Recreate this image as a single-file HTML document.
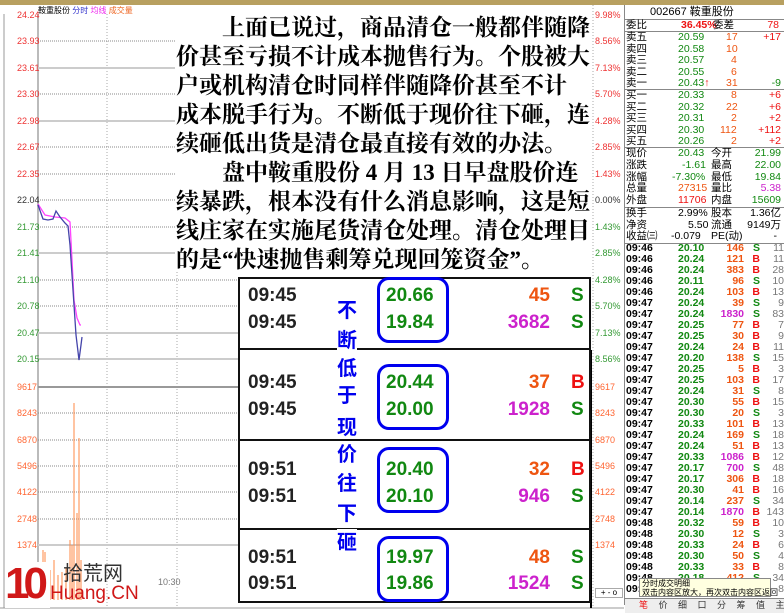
<!DOCTYPE html>
<html><head><meta charset="utf-8"><style>
*{margin:0;padding:0;box-sizing:border-box}
body{width:784px;height:613px;overflow:hidden;background:#fff;position:relative;font-family:"Liberation Sans","Noto Sans CJK SC",sans-serif}
.a{position:absolute;white-space:nowrap}
.lb{font-size:9px;left:17px}
.rb{font-size:9px;left:595px}
.t{font-family:"Liberation Serif","Noto Serif CJK SC",serif;font-size:23px;color:#000;font-weight:bold;line-height:29px;left:176px;letter-spacing:0}
.tm{font:bold 19px "Liberation Sans",sans-serif;color:#222;left:248px}
.px{font:bold 19px "Liberation Sans",sans-serif;color:#118811;left:386px}
.q{font:bold 19px "Liberation Sans",sans-serif;right:234px;text-align:right}
.bs{font:bold 19px "Liberation Sans",sans-serif;left:571px}
.box{position:absolute;left:377px;width:72px;height:66px;border:3px solid #0000ee;border-radius:12px}
.vt{font:bold 20px "Noto Sans CJK SC",sans-serif;color:#0000ee;left:337px;background:#fff;line-height:24px}
.r{font-size:10.5px;line-height:11px;font-weight:bold}
.g{color:#118811}.rd{color:#ee1111}.or{color:#ee5511}.mg{color:#cc22cc}
</style></head><body>
<div class="a" style="left:0;top:0;width:784px;height:5px;background:#b8a060"></div>
<div class="a" style="left:38px;top:5px;font-size:8px;color:#000">鞍重股份 <span style="color:#33c">分时</span> <span style="color:#e2e">均线</span> <span style="color:#e62">成交量</span></div>
<svg class="a" style="left:0;top:0" width="625" height="613">
<line x1="38" y1="14" x2="38" y2="608" stroke="#bbb" stroke-width="2"/>
<line x1="107" y1="14" x2="107" y2="608" stroke="#aaa" stroke-dasharray="1,2"/>
<line x1="177" y1="14" x2="177" y2="608" stroke="#aaa" stroke-dasharray="1,2"/>
<line x1="593" y1="5" x2="593" y2="608" stroke="#aaa" stroke-dasharray="1,2"/>
<g stroke="#888" stroke-dasharray="1,1">
<line x1="38" y1="41" x2="590" y2="41"/><line x1="38" y1="94" x2="590" y2="94"/><line x1="38" y1="147" x2="590" y2="147"/><line x1="38" y1="174" x2="590" y2="174"/><line x1="38" y1="200" x2="590" y2="200"/><line x1="38" y1="227" x2="590" y2="227"/><line x1="38" y1="280" x2="590" y2="280"/><line x1="38" y1="306" x2="590" y2="306"/><line x1="38" y1="413" x2="590" y2="413"/><line x1="38" y1="440" x2="590" y2="440"/><line x1="38" y1="466" x2="590" y2="466"/><line x1="38" y1="492" x2="590" y2="492"/><line x1="38" y1="519" x2="590" y2="519"/>
</g>
<g stroke="#ccc" stroke-width="2"><line x1="38" y1="68" x2="590" y2="68"/><line x1="38" y1="121" x2="590" y2="121"/><line x1="38" y1="253" x2="590" y2="253"/><line x1="38" y1="333" x2="590" y2="333"/><line x1="38" y1="359" x2="590" y2="359"/><line x1="38" y1="545" x2="590" y2="545"/></g>
<line x1="38" y1="387" x2="590" y2="387" stroke="#999" stroke-width="2"/>
<line x1="4" y1="14" x2="4" y2="608" stroke="#999"/>
<line x1="0" y1="608" x2="625" y2="608" stroke="#999"/>
<polyline fill="none" stroke="#f4f" stroke-width="1.3" points="38,204 45,215 55,217 65,218 70,222 72,260 74,300 77,318 80,325 81,325"/>
<polyline fill="none" stroke="#44a" stroke-width="1.3" points="38,205 43,219 48,220 53,219 56,211 60,217 65,223 68,226 70,245 73,290 76,335 79,360 81,345 82,337"/>
<g stroke="#f84" stroke-width="1"><line x1="40" y1="600" x2="40" y2="565"/><line x1="43" y1="600" x2="43" y2="550"/><line x1="45" y1="600" x2="45" y2="552"/><line x1="50" y1="600" x2="50" y2="570"/><line x1="54" y1="600" x2="54" y2="560"/><line x1="58" y1="600" x2="58" y2="575"/><line x1="62" y1="600" x2="62" y2="572"/><line x1="66" y1="600" x2="66" y2="568"/><line x1="70" y1="600" x2="70" y2="540"/><line x1="72" y1="600" x2="72" y2="545"/><line x1="74" y1="600" x2="74" y2="403"/><line x1="77" y1="600" x2="77" y2="513"/><line x1="79" y1="600" x2="79" y2="438"/><line x1="81" y1="600" x2="81" y2="560"/></g>
<line x1="591" y1="350" x2="591" y2="608" stroke="#000" stroke-width="2"/>
</svg>
<div class="a lb" style="top:10px;color:#e33">24.24</div><div class="a lb" style="top:36px;color:#e33">23.93</div><div class="a lb" style="top:63px;color:#e33">23.61</div><div class="a lb" style="top:89px;color:#e33">23.30</div><div class="a lb" style="top:116px;color:#e33">22.98</div><div class="a lb" style="top:142px;color:#e33">22.67</div><div class="a lb" style="top:169px;color:#e33">22.35</div><div class="a lb" style="top:195px;color:#333">22.04</div><div class="a lb" style="top:222px;color:#393">21.73</div><div class="a lb" style="top:248px;color:#393">21.41</div><div class="a lb" style="top:275px;color:#393">21.10</div><div class="a lb" style="top:301px;color:#393">20.78</div><div class="a lb" style="top:328px;color:#393">20.47</div><div class="a lb" style="top:354px;color:#393">20.15</div>
<div class="a lb" style="top:382px;color:#f63">9617</div><div class="a lb" style="top:408px;color:#f63">8243</div><div class="a lb" style="top:435px;color:#f63">6870</div><div class="a lb" style="top:461px;color:#f63">5496</div><div class="a lb" style="top:487px;color:#f63">4122</div><div class="a lb" style="top:514px;color:#f63">2748</div><div class="a lb" style="top:540px;color:#f63">1374</div>
<div class="a" style="left:158px;top:577px;font-size:9px;color:#777">10:30</div>
<div class="a rb" style="top:10px;color:#e33">9.98%</div><div class="a rb" style="top:36px;color:#e33">8.56%</div><div class="a rb" style="top:63px;color:#e33">7.13%</div><div class="a rb" style="top:89px;color:#e33">5.70%</div><div class="a rb" style="top:116px;color:#e33">4.28%</div><div class="a rb" style="top:142px;color:#e33">2.85%</div><div class="a rb" style="top:169px;color:#e33">1.43%</div><div class="a rb" style="top:195px;color:#333">0.00%</div><div class="a rb" style="top:222px;color:#393">1.43%</div><div class="a rb" style="top:248px;color:#393">2.85%</div><div class="a rb" style="top:275px;color:#393">4.28%</div><div class="a rb" style="top:301px;color:#393">5.70%</div><div class="a rb" style="top:328px;color:#393">7.13%</div><div class="a rb" style="top:354px;color:#393">8.56%</div>
<div class="a rb" style="top:382px;color:#f63">9617</div><div class="a rb" style="top:408px;color:#f63">8243</div><div class="a rb" style="top:435px;color:#f63">6870</div><div class="a rb" style="top:461px;color:#f63">5496</div><div class="a rb" style="top:487px;color:#f63">4122</div><div class="a rb" style="top:514px;color:#f63">2748</div><div class="a rb" style="top:540px;color:#f63">1374</div>
<div class="a" style="left:175px;top:14px;width:415px;height:258px;background:#fff"></div>
<div class="a t" style="top:13px;left:222px">上面已说过，商品清仓一般都伴随降</div>
<div class="a t" style="top:42px">价甚至亏损不计成本抛售行为。个股被大</div>
<div class="a t" style="top:71px">户或机构清仓时同样伴随降价甚至不计</div>
<div class="a t" style="top:100px">成本脱手行为。不断低于现价往下砸，连</div>
<div class="a t" style="top:129px">续砸低出货是清仓最直接有效的办法。</div>
<div class="a t" style="top:158px;left:222px">盘中鞍重股份 4 月 13 日早盘股价连</div>
<div class="a t" style="top:187px">续暴跌，根本没有什么消息影响，这是短</div>
<div class="a t" style="top:216px">线庄家在实施尾货清仓处理。清仓处理目</div>
<div class="a t" style="top:245px">的是“快速抛售剩筹兑现回笼资金”。</div>
<div class="a" style="left:238px;top:277px;width:353px;height:326px;background:#fff;border:2px solid #111"></div>
<div class="a" style="left:238px;top:348px;width:352px;height:2px;background:#111"></div>
<div class="a" style="left:238px;top:439px;width:352px;height:2px;background:#111"></div>
<div class="a" style="left:238px;top:528px;width:352px;height:2px;background:#111"></div>
<div class="box" style="top:277px"></div><div class="box" style="top:364px"></div><div class="box" style="top:447px"></div><div class="box" style="top:536px"></div>
<div class="a tm" style="top:285px">09:45</div><div class="a tm" style="top:312px">09:45</div>
<div class="a tm" style="top:372px">09:45</div><div class="a tm" style="top:399px">09:45</div>
<div class="a tm" style="top:459px">09:51</div><div class="a tm" style="top:486px">09:51</div>
<div class="a tm" style="top:547px">09:51</div><div class="a tm" style="top:573px">09:51</div>
<div class="a px" style="top:285px">20.66</div><div class="a px" style="top:312px">19.84</div>
<div class="a px" style="top:372px">20.44</div><div class="a px" style="top:399px">20.00</div>
<div class="a px" style="top:459px">20.40</div><div class="a px" style="top:486px">20.10</div>
<div class="a px" style="top:547px">19.97</div><div class="a px" style="top:573px">19.86</div>
<div class="a q or" style="top:285px">45</div><div class="a q mg" style="top:312px">3682</div>
<div class="a q or" style="top:372px">37</div><div class="a q mg" style="top:399px">1928</div>
<div class="a q or" style="top:459px">32</div><div class="a q mg" style="top:486px">946</div>
<div class="a q or" style="top:547px">48</div><div class="a q mg" style="top:573px">1524</div>
<div class="a bs g" style="top:285px">S</div><div class="a bs g" style="top:312px">S</div>
<div class="a bs rd" style="top:372px">B</div><div class="a bs g" style="top:399px">S</div>
<div class="a bs rd" style="top:459px">B</div><div class="a bs g" style="top:486px">S</div>
<div class="a bs g" style="top:547px">S</div><div class="a bs g" style="top:573px">S</div>
<div class="a vt" style="top:297px">不</div><div class="a vt" style="top:327px">断</div><div class="a vt" style="top:355px">低</div><div class="a vt" style="top:382px">于</div><div class="a vt" style="top:414px">现</div><div class="a vt" style="top:441px">价</div><div class="a vt" style="top:470px">往</div><div class="a vt" style="top:500px">下</div><div class="a vt" style="top:529px">砸</div>
<!-- logo -->
<div class="a" style="left:5px;top:562px;width:45px;height:46px;background:#fff"></div>
<div class="a" style="left:5px;top:560px;font:bold 44px 'Liberation Sans',sans-serif;color:#d01818;letter-spacing:-6px;line-height:48px">10</div>
<div class="a" style="left:63px;top:560px;font:20px 'Noto Sans CJK SC',sans-serif;color:#333;line-height:24px">拾荒网</div>
<div class="a" style="left:50px;top:583px;font:19px 'Liberation Sans',sans-serif;color:#d01818;line-height:22px">Huang.CN</div>
<!-- right panel -->
<div class="a" style="left:624px;top:5px;width:160px;height:608px;background:#fff"></div>
<div class="a" style="left:650px;top:5px;font-size:11px;line-height:14px">002667 鞍重股份</div>
<div class="a" style="left:625px;top:19px;width:159px;height:1px;background:#888"></div>
<div class="a" style="left:625px;top:31px;width:159px;height:1px;background:#888"></div>
<div class="a" style="left:625px;top:89px;width:159px;height:1px;background:#888"></div>
<div class="a" style="left:625px;top:147px;width:159px;height:1px;background:#888"></div>
<div class="a" style="left:625px;top:207px;width:159px;height:1px;background:#888"></div>
<div class="a" style="left:625px;top:243px;width:159px;height:1px;background:#888"></div>
<div class="a" style="left:624px;top:5px;width:1px;height:600px;background:#888"></div>
<div class="a r" style="left:626px;top:20px;width:155px;font-weight:normal"><span>委比</span><span class="a rd" style="left:55px;font-weight:bold">36.45%</span><span class="a" style="left:87px">委差</span><span class="a rd" style="right:2px">78</span></div>
<div class="a r" style="left:626px;top:32px;width:155px;height:56px;font-weight:normal">
<div style="position:relative;height:11.5px">卖五<span class="a g" style="left:52px">20.59</span><span class="a or" style="left:100px">17</span><span class="a rd" style="right:0">+17</span></div>
<div style="position:relative;height:11.5px">卖四<span class="a g" style="left:52px">20.58</span><span class="a or" style="left:100px">10</span></div>
<div style="position:relative;height:11.5px">卖三<span class="a g" style="left:52px">20.57</span><span class="a or" style="left:105px">4</span></div>
<div style="position:relative;height:11.5px">卖二<span class="a g" style="left:52px">20.55</span><span class="a or" style="left:105px">6</span></div>
<div style="position:relative;height:11.5px">卖一<span class="a g" style="left:52px">20.43<span class="rd">↑</span></span><span class="a or" style="left:100px">31</span><span class="a g" style="right:0">-9</span></div></div>
<div class="a r" style="left:626px;top:90px;width:155px;height:56px;font-weight:normal">
<div style="position:relative;height:11.5px">买一<span class="a g" style="left:52px">20.33</span><span class="a or" style="left:105px">8</span><span class="a rd" style="right:0">+6</span></div>
<div style="position:relative;height:11.5px">买二<span class="a g" style="left:52px">20.32</span><span class="a or" style="left:100px">22</span><span class="a rd" style="right:0">+6</span></div>
<div style="position:relative;height:11.5px">买三<span class="a g" style="left:52px">20.31</span><span class="a or" style="left:105px">2</span><span class="a rd" style="right:0">+2</span></div>
<div style="position:relative;height:11.5px">买四<span class="a g" style="left:52px">20.30</span><span class="a or" style="left:94px">112</span><span class="a rd" style="right:0">+112</span></div>
<div style="position:relative;height:11.5px">买五<span class="a g" style="left:52px">20.26</span><span class="a or" style="left:105px">2</span><span class="a rd" style="right:0">+2</span></div></div>
<div class="a r" style="left:626px;top:148px;width:155px;font-weight:normal">
<div style="position:relative;height:11.8px">现价<span class="a g" style="left:52px">20.43</span><span class="a" style="left:85px">今开</span><span class="a g" style="right:0">21.99</span></div>
<div style="position:relative;height:11.8px">涨跌<span class="a g" style="left:56px">-1.61</span><span class="a" style="left:85px">最高</span><span class="a g" style="right:0">22.00</span></div>
<div style="position:relative;height:11.8px">涨幅<span class="a g" style="left:46px">-7.30%</span><span class="a" style="left:85px">最低</span><span class="a g" style="right:0">19.84</span></div>
<div style="position:relative;height:11.8px">总量<span class="a or" style="left:52px">27315</span><span class="a" style="left:85px">量比</span><span class="a mg" style="right:0">5.38</span></div>
<div style="position:relative;height:11.8px">外盘<span class="a rd" style="left:52px">11706</span><span class="a" style="left:85px">内盘</span><span class="a g" style="right:0">15609</span></div></div>
<div class="a r" style="left:626px;top:208px;width:155px;font-weight:normal">
<div style="position:relative;height:11.5px">换手<span class="a" style="left:52px">2.99%</span><span class="a" style="left:85px">股本</span><span class="a" style="right:0">1.36亿</span></div>
<div style="position:relative;height:11.5px">净资<span class="a" style="left:62px">5.50</span><span class="a" style="left:85px">流通</span><span class="a" style="right:0">9149万</span></div>
<div style="position:relative;height:11.5px">收益㈢<span class="a" style="left:45px">-0.079</span><span class="a" style="left:85px">PE(动)</span><span class="a" style="right:4px">-</span></div></div>
<div class="a r" style="left:626px;top:243px;width:158px;line-height:11px">
<div style="position:relative;height:11px">09:46<span class="a g" style="left:52px">20.10</span><span class="a or" style="right:40px">146</span><span class="a g" style="right:24px">S</span><span class="a" style="right:0;color:#777;font-weight:normal">11</span></div>
<div style="position:relative;height:11px">09:46<span class="a g" style="left:52px">20.24</span><span class="a or" style="right:40px">121</span><span class="a rd" style="right:24px">B</span><span class="a" style="right:0;color:#777;font-weight:normal">11</span></div>
<div style="position:relative;height:11px">09:46<span class="a g" style="left:52px">20.24</span><span class="a or" style="right:40px">383</span><span class="a rd" style="right:24px">B</span><span class="a" style="right:0;color:#777;font-weight:normal">28</span></div>
<div style="position:relative;height:11px">09:46<span class="a g" style="left:52px">20.11</span><span class="a or" style="right:40px">96</span><span class="a g" style="right:24px">S</span><span class="a" style="right:0;color:#777;font-weight:normal">10</span></div>
<div style="position:relative;height:11px">09:46<span class="a g" style="left:52px">20.24</span><span class="a or" style="right:40px">103</span><span class="a rd" style="right:24px">B</span><span class="a" style="right:0;color:#777;font-weight:normal">13</span></div>
<div style="position:relative;height:11px">09:47<span class="a g" style="left:52px">20.24</span><span class="a or" style="right:40px">39</span><span class="a g" style="right:24px">S</span><span class="a" style="right:0;color:#777;font-weight:normal">9</span></div>
<div style="position:relative;height:11px">09:47<span class="a g" style="left:52px">20.24</span><span class="a mg" style="right:40px">1830</span><span class="a g" style="right:24px">S</span><span class="a" style="right:0;color:#777;font-weight:normal">83</span></div>
<div style="position:relative;height:11px">09:47<span class="a g" style="left:52px">20.25</span><span class="a or" style="right:40px">77</span><span class="a rd" style="right:24px">B</span><span class="a" style="right:0;color:#777;font-weight:normal">7</span></div>
<div style="position:relative;height:11px">09:47<span class="a g" style="left:52px">20.25</span><span class="a or" style="right:40px">30</span><span class="a rd" style="right:24px">B</span><span class="a" style="right:0;color:#777;font-weight:normal">9</span></div>
<div style="position:relative;height:11px">09:47<span class="a g" style="left:52px">20.24</span><span class="a or" style="right:40px">24</span><span class="a rd" style="right:24px">B</span><span class="a" style="right:0;color:#777;font-weight:normal">11</span></div>
<div style="position:relative;height:11px">09:47<span class="a g" style="left:52px">20.20</span><span class="a or" style="right:40px">138</span><span class="a g" style="right:24px">S</span><span class="a" style="right:0;color:#777;font-weight:normal">15</span></div>
<div style="position:relative;height:11px">09:47<span class="a g" style="left:52px">20.25</span><span class="a or" style="right:40px">5</span><span class="a rd" style="right:24px">B</span><span class="a" style="right:0;color:#777;font-weight:normal">3</span></div>
<div style="position:relative;height:11px">09:47<span class="a g" style="left:52px">20.25</span><span class="a or" style="right:40px">103</span><span class="a rd" style="right:24px">B</span><span class="a" style="right:0;color:#777;font-weight:normal">17</span></div>
<div style="position:relative;height:11px">09:47<span class="a g" style="left:52px">20.24</span><span class="a or" style="right:40px">31</span><span class="a g" style="right:24px">S</span><span class="a" style="right:0;color:#777;font-weight:normal">8</span></div>
<div style="position:relative;height:11px">09:47<span class="a g" style="left:52px">20.30</span><span class="a or" style="right:40px">55</span><span class="a rd" style="right:24px">B</span><span class="a" style="right:0;color:#777;font-weight:normal">15</span></div>
<div style="position:relative;height:11px">09:47<span class="a g" style="left:52px">20.30</span><span class="a or" style="right:40px">20</span><span class="a g" style="right:24px">S</span><span class="a" style="right:0;color:#777;font-weight:normal">3</span></div>
<div style="position:relative;height:11px">09:47<span class="a g" style="left:52px">20.33</span><span class="a or" style="right:40px">101</span><span class="a rd" style="right:24px">B</span><span class="a" style="right:0;color:#777;font-weight:normal">13</span></div>
<div style="position:relative;height:11px">09:47<span class="a g" style="left:52px">20.24</span><span class="a or" style="right:40px">169</span><span class="a g" style="right:24px">S</span><span class="a" style="right:0;color:#777;font-weight:normal">18</span></div>
<div style="position:relative;height:11px">09:47<span class="a g" style="left:52px">20.24</span><span class="a or" style="right:40px">51</span><span class="a rd" style="right:24px">B</span><span class="a" style="right:0;color:#777;font-weight:normal">13</span></div>
<div style="position:relative;height:11px">09:47<span class="a g" style="left:52px">20.33</span><span class="a mg" style="right:40px">1086</span><span class="a rd" style="right:24px">B</span><span class="a" style="right:0;color:#777;font-weight:normal">12</span></div>
<div style="position:relative;height:11px">09:47<span class="a g" style="left:52px">20.17</span><span class="a mg" style="right:40px">700</span><span class="a g" style="right:24px">S</span><span class="a" style="right:0;color:#777;font-weight:normal">48</span></div>
<div style="position:relative;height:11px">09:47<span class="a g" style="left:52px">20.17</span><span class="a or" style="right:40px">306</span><span class="a rd" style="right:24px">B</span><span class="a" style="right:0;color:#777;font-weight:normal">18</span></div>
<div style="position:relative;height:11px">09:47<span class="a g" style="left:52px">20.30</span><span class="a or" style="right:40px">41</span><span class="a rd" style="right:24px">B</span><span class="a" style="right:0;color:#777;font-weight:normal">16</span></div>
<div style="position:relative;height:11px">09:47<span class="a g" style="left:52px">20.14</span><span class="a or" style="right:40px">237</span><span class="a g" style="right:24px">S</span><span class="a" style="right:0;color:#777;font-weight:normal">34</span></div>
<div style="position:relative;height:11px">09:47<span class="a g" style="left:52px">20.14</span><span class="a mg" style="right:40px">1870</span><span class="a rd" style="right:24px">B</span><span class="a" style="right:0;color:#777;font-weight:normal">143</span></div>
<div style="position:relative;height:11px">09:48<span class="a g" style="left:52px">20.32</span><span class="a or" style="right:40px">59</span><span class="a rd" style="right:24px">B</span><span class="a" style="right:0;color:#777;font-weight:normal">10</span></div>
<div style="position:relative;height:11px">09:48<span class="a g" style="left:52px">20.30</span><span class="a or" style="right:40px">12</span><span class="a g" style="right:24px">S</span><span class="a" style="right:0;color:#777;font-weight:normal">3</span></div>
<div style="position:relative;height:11px">09:48<span class="a g" style="left:52px">20.33</span><span class="a or" style="right:40px">24</span><span class="a rd" style="right:24px">B</span><span class="a" style="right:0;color:#777;font-weight:normal">6</span></div>
<div style="position:relative;height:11px">09:48<span class="a g" style="left:52px">20.30</span><span class="a or" style="right:40px">50</span><span class="a g" style="right:24px">S</span><span class="a" style="right:0;color:#777;font-weight:normal">4</span></div>
<div style="position:relative;height:11px">09:48<span class="a g" style="left:52px">20.33</span><span class="a or" style="right:40px">33</span><span class="a rd" style="right:24px">B</span><span class="a" style="right:0;color:#777;font-weight:normal">8</span></div>
<div style="position:relative;height:11px">09:48<span class="a g" style="left:52px">20.18</span><span class="a or" style="right:40px">412</span><span class="a g" style="right:24px">S</span><span class="a" style="right:0;color:#777;font-weight:normal">34</span></div>
<div style="position:relative;height:11px">09:48<span class="a" style="right:0;color:#777;font-weight:normal">8</span></div>
</div>
<div class="a" style="left:639px;top:578px;width:132px;height:19px;background:#ffffe0;border:1px solid #888;font-size:8px;line-height:9px;padding-left:2px">分时成交明细<br>双击内容区放大，再次双击内容区返回</div>
<div class="a" style="left:625px;top:598px;width:159px;height:15px;background:#eee;border-top:1px solid #888;font-size:9px;line-height:13px;color:#333;word-spacing:8px;padding-left:14px"><span style="color:#e11">笔</span> 价 细 口 分 筹 值 主</div>
<div class="a" style="left:595px;top:588px;width:28px;height:10px;font-size:8px;border:1px solid #aaa;line-height:8px;text-align:center">+ - o</div>
</body></html>
